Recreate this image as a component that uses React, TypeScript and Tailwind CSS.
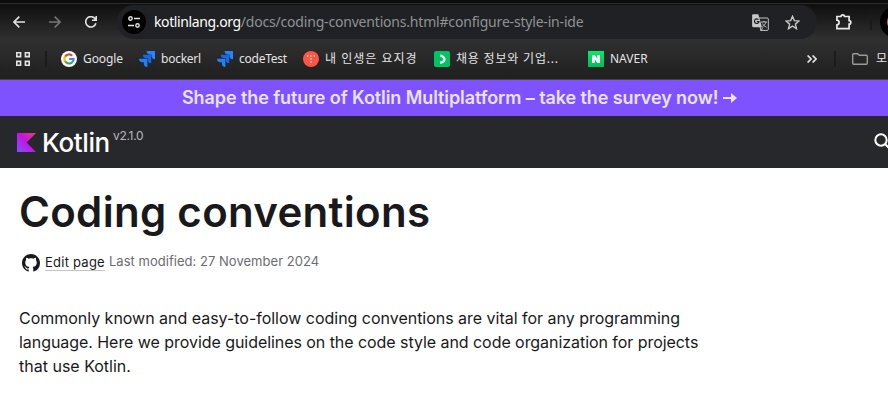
import type { ReactNode } from 'react';

interface BookmarkProps {
    label: string;
    icon: ReactNode;
    className: string;
    textClass: string;
}

const GoogleIcon = () => (
    <svg className="shrink-0" width="16" height="16" viewBox="0 0 16 16" fill="none">
        <circle cx="8" cy="8" r="8" fill="#fff" />
        <g strokeWidth="2.1">
            <path d="M4.1 5.6A4.6 4.6 0 0 1 11.2 4.7" stroke="#ea4335" />
            <path d="M4.1 5.5a4.7 4.7 0 0 0 0 5" stroke="#fbbc05" />
            <path d="M4.1 10.3a4.6 4.6 0 0 0 6.9 1.1" stroke="#34a853" />
            <path d="M8.2 8h4.4c0 1.6-.6 2.7-1.7 3.5" stroke="#4285f4" />
        </g>
    </svg>
);

const JiraIcon = () => (
    <svg className="shrink-0" width="16" height="16" viewBox="0 0 24 24">
        <path d="M11.571 11.513H0a5.218 5.218 0 0 0 5.232 5.215h2.130v2.057A5.215 5.215 0 0 0 12.575 24V12.518a1.005 1.005 0 0 0-1.005-1.005z" fill="#2380fa" />
        <path d="M17.294 5.757H5.736a5.215 5.215 0 0 0 5.215 5.214h2.129v2.058a5.218 5.218 0 0 0 5.215 5.214V6.758a1.001 1.001 0 0 0-1.001-1.001z" fill="#1a68de" />
        <path d="M23.013 0H11.455a5.215 5.215 0 0 0 5.215 5.215h2.129v2.057A5.215 5.215 0 0 0 24 12.483V1.005A1.001 1.001 0 0 0 23.013 0z" fill="#2684ff" />
    </svg>
);

const TistoryIcon = () => (
    <svg className="shrink-0" width="16" height="16" viewBox="0 0 16 16">
        <circle cx="8" cy="8" r="8" fill="#ff5544" />
        <g fill="#fff">
            <circle cx="4.800" cy="5" r=".8" />
            <circle cx="8" cy="5" r=".8" />
            <circle cx="11.200" cy="5" r=".8" />
            <circle cx="8" cy="8" r=".8" />
            <circle cx="8" cy="11" r=".8" />
        </g>
    </svg>
);

const JobIcon = () => (
    <svg className="shrink-0" width="16" height="16" viewBox="0 0 16 16" fill="none">
        <rect width="16" height="16" rx="2" fill="#00c362" />
        <path d="M6.300 4.300c2.500 1 4.200 2.200 4.200 4S8.900 11.300 6 11.900" stroke="#fff" strokeWidth="2.200" />
    </svg>
);

const NaverIcon = () => (
    <svg className="shrink-0" width="16" height="16" viewBox="0 0 16 16">
        <defs>
            <linearGradient id="naver" x1="0" y1="0" x2="0" y2="1">
                <stop offset="0" stopColor="#03ee64" />
                <stop offset="1" stopColor="#04b95c" />
            </linearGradient>
        </defs>
        <rect width="16" height="16" fill="url(#naver)" />
        <path d="M4 4h2.800l2.500 3.700V4H12v8H9.300L6.800 8.300V12H4z" fill="#fff" />
    </svg>
);

const TranslateIcon = () => (
    <svg className="shrink-0" width="17" height="17" viewBox="0 0 17 17" fill="none">
        <path d="M6 4h9.300c.6 0 1 .4 1 1v10.400c0 .6-.4 1-1 1H8.500" stroke="#c7c7c7" />
        <path d="M1.300.3h5l3.700 12.900H1.300c-.7 0-1.200-.5-1.200-1.200V1.500C.1.800.6.3 1.300.3z" fill="#c7c7c7" />
        <path d="M6.500 5.700A2.300 2.300 0 1 0 7 7.700H4.800" stroke="#202124" strokeWidth="1.200" />
        <path d="M9 8h6M12 6.800V8M14 8c-.5 2-2 3.500-3.500 4.500M10.500 9.500c.8 1.600 2 2.800 4 3.700M8 13l1 3.500 2-3.300" stroke="#c7c7c7" />
    </svg>
);

const Bookmark = ({ label, icon, className, textClass }: BookmarkProps) => (
    <div className={`flex shrink-0 items-center gap-[6px] ${className}`}>
        {icon}
        <span className={`whitespace-nowrap text-xs ${textClass}`}>{label}</span>
    </div>
);

const Toolbar = () => (
    <div className="flex h-[34px] items-center">
        <div className="flex w-[117px] shrink-0 items-center pl-[13px]">
            <svg width="12" height="12" viewBox="0 0 12 12" fill="none" stroke="#e3e3e3" strokeWidth="1.600">
                <path d="M12 6H1M6.300.600.900 6l5.400 5.400" />
            </svg>
            <svg className="ml-6" width="12" height="12" viewBox="0 0 12 12" fill="none" stroke="#757575" strokeWidth="1.600">
                <path d="M0 6h11M5.700.600 11.100 6l-5.400 5.400" />
            </svg>
            <svg className="ml-6" width="12" height="12" viewBox="0 0 12 12" fill="none" stroke="#e3e3e3" strokeWidth="1.600">
                <path d="M10.900 7.200A5.200 5.200 0 1 1 10.500 3.400L11 4.300M11.200 0v4.300H7" />
            </svg>
        </div>
        <div className="flex h-[34px] w-[700px] shrink-0 items-center rounded-full bg-[#202124] pl-[5px]">
            <div className="flex size-6 shrink-0 items-center justify-center rounded-full bg-black">
                <svg width="12" height="12" viewBox="0 0 12 12" fill="none" stroke="#e3e3e3" strokeWidth="1.400">
                    <circle cx="2.500" cy="2.500" r="1.700" />
                    <path d="M6 2.500h6M0 9.500h6" />
                    <circle cx="9.500" cy="9.500" r="1.700" />
                </svg>
            </div>
            <span className="ml-2 w-[598px] shrink-0 whitespace-nowrap text-sm tracking-[-0.19px] text-[#8f9195]">
                <span className="tracking-[-0.38px] text-white">kotlinlang.org</span>/docs/coding-conventions.html#configure-style-in-ide
            </span>
            <TranslateIcon />
            <svg className="ml-4 shrink-0" width="15" height="15" viewBox="0 0 15 15" fill="none" stroke="#c7c7c7" strokeWidth="1.400">
                <path d="m7.500 1.300 1.800 4.300 4.700.4-3.600 3.100 1.100 4.600-4-2.500-4 2.500 1.100-4.600L1 6l4.700-.4z" />
            </svg>
        </div>
        <svg className="ml-[18px] shrink-0" width="18" height="18" viewBox="0 0 18 18" fill="none" stroke="#e8e8e8" strokeWidth="1.700">
            <path d="M1.900 3.500H6C6 1.200 9.500 1.200 9.500 3.500h4.600v4.200c2.300 0 2.300 3.400 0 3.400v4.500H1.900v-3.700c3-.3 3-4.400 0-4.700z" />
        </svg>
        <div className="ml-[17px] h-4 w-[2px] shrink-0 bg-[#1b1b1b]" />
        <div className="ml-2 flex size-8 shrink-0 items-center justify-center rounded-full bg-black">
            <div className="size-[18px] rounded-full bg-[#e06a1c]" />
        </div>
    </div>
);

const BookmarksBar = () => (
    <div className="flex h-[40px] items-center pl-4 text-[#e3e3e3]">
        <svg className="shrink-0" width="14" height="14" viewBox="0 0 14 14" fill="none" stroke="#e3e3e3" strokeWidth="1.600">
            <path d="M.8.800h3.800v3.800H.8zM9.400.800h3.800v3.800H9.400zM.8 9.400h3.800v3.800H.8zM9.400 9.400h3.800v3.800H9.400z" />
        </svg>
        <div className="ml-[15px] h-4 w-[2px] shrink-0 bg-[#1b1b1b]" />
        <Bookmark className="ml-[14px] w-[78px]" textClass="tracking-[-0.1px]" icon={<GoogleIcon />} label="Google" />
        <Bookmark className="w-[78px]" textClass="tracking-[-0.25px]" icon={<JiraIcon />} label="bockerl" />
        <Bookmark className="w-[86px]" textClass="tracking-[-0.25px]" icon={<JiraIcon />} label="codeTest" />
        <Bookmark className="w-[131px]" textClass="tracking-[1px]" icon={<TistoryIcon />} label="내 인생은 요지경" />
        <Bookmark className="w-[154px]" textClass="tracking-[0.8px]" icon={<JobIcon />} label="채용 정보와 기업..." />
        <Bookmark className="w-[219px]" textClass="" icon={<NaverIcon />} label="NAVER" />
        <svg className="shrink-0" width="10" height="8" viewBox="0 0 10 8" fill="none" stroke="#e3e3e3" strokeWidth="1.700">
            <path d="M.6.500 4.100 4 .6 7.500M5.600.500 9.100 4 5.600 7.500" />
        </svg>
        <div className="ml-[17px] h-4 w-[2px] shrink-0 bg-[#1b1b1b]" />
        <svg className="ml-4 shrink-0" width="16" height="12" viewBox="0 0 16 12" fill="none" stroke="#9a9a9a" strokeWidth="1.400">
            <path d="M.7 1.700c0-.6.400-1 1-1h4l1.600 1.600h7c.6 0 1 .4 1 1v7c0 .6-.4 1-1 1H1.700c-.6 0-1-.4-1-1z" />
        </svg>
        <span className="ml-2 text-xs">모</span>
    </div>
);

const App = () => {
    return (
        <div className="h-[415px] w-[888px] overflow-hidden bg-white font-['Inter','Liberation_Sans',sans-serif]">
            <div className="h-[80px] border-b border-[#444444] bg-linear-to-b from-[#0c0c0c] via-[#303030] via-50% to-[#1f1f1f] font-['Noto_Sans','Noto_Sans_CJK_KR',sans-serif]">
                <div className="mb-px h-1 border-b border-[#2c2c2c] bg-[#0c0c0c]" />
                <Toolbar />
                <BookmarksBar />
            </div>
            <div className="flex h-9 items-center bg-[#7f52ff] pl-[182px]">
                <span className="whitespace-nowrap text-lg font-semibold tracking-[-0.09px] text-[#e9e3ff]">Shape the future of Kotlin Multiplatform – take the survey now!</span>
                <svg className="ml-[5px]" width="14" height="12" viewBox="0 0 14 12" fill="none">
                    <path d="M0 6h9" stroke="#e9e3ff" strokeWidth="2" />
                    <path d="m8 1 6 5-6 5z" fill="#e9e3ff" />
                </svg>
            </div>
            <header className="flex h-[52px] items-center bg-[#27282c] pl-[17px] text-white">
                <svg className="shrink-0" width="19" height="19" viewBox="0 0 19 19">
                    <defs>
                        <linearGradient id="kotlin" x1="1" y1="0" x2="0" y2="1">
                            <stop offset="0" stopColor="#e44857" />
                            <stop offset=".45" stopColor="#c711e1" />
                            <stop offset="1" stopColor="#7f52ff" />
                        </linearGradient>
                    </defs>
                    <path d="M0 0h19L9.500 9.500 19 19H0z" fill="url(#kotlin)" />
                </svg>
                <span className="ml-[6px] w-[71px] shrink-0 text-[26px] font-medium tracking-[-0.4px]">Kotlin</span>
                <span className="mb-[12px] w-[761px] shrink-0 text-xs tracking-[-0.3px] text-[#b8b8ba]">v2.1.0</span>
                <svg className="shrink-0" width="18" height="18" viewBox="0 0 18 18" fill="none" stroke="#fff" strokeWidth="2">
                    <circle cx="7" cy="7" r="5.700" />
                    <path d="m11 11 6 6" />
                </svg>
            </header>
            <main className="pl-5 text-[#19191c]">
                <h1 className="-ml-px pt-[18px] text-[42px] leading-[52px] font-semibold tracking-[0.3px]">
                    <span className="whitespace-nowrap">Coding conventions</span>
                </h1>
                <div className="mt-[14px] flex h-5 items-center pl-[2px] text-[13px]">
                    <svg className="mt-[2px]" width="18" height="18" viewBox="0 0 16 16" fill="#19191c">
                        <path d="M8 0C3.580 0 0 3.580 0 8c0 3.540 2.290 6.530 5.470 7.590.4.070.55-.17.55-.38 0-.19-.01-.82-.01-1.490-2.010.37-2.530-.49-2.690-.94-.09-.23-.48-.94-.82-1.130-.28-.15-.68-.52-.01-.53.630-.01 1.080.580 1.230.820.720 1.210 1.870.870 2.330.660.070-.52.280-.87.510-1.070-1.780-.2-3.640-.89-3.640-3.950 0-.87.310-1.590.820-2.150-.08-.2-.36-1.020.080-2.120 0 0 .670-.21 2.200.820.640-.18 1.320-.27 2-.27s1.360.090 2 .27c1.530-1.040 2.200-.82 2.200-.82.440 1.100.160 1.920.080 2.120.510.560.820 1.270.820 2.150 0 3.070-1.870 3.750-3.650 3.950.290.250.540.730.540 1.480 0 1.070-.01 1.930-.01 2.200 0 .210.150.460.550.380A8.010 8.010 0 0 0 16 8c0-4.420-3.580-8-8-8z" />
                    </svg>
                    <span className="ml-[5px] whitespace-nowrap border-b border-[#c4c4c6] leading-[16px] tracking-[0.24px]">Edit page</span>
                    <span className="ml-1 whitespace-nowrap tracking-[0.03px] text-[#6b6b6f]">Last modified: 27 November 2024</span>
                </div>
                <p className="-ml-px mt-[34px] text-base">
                    <span className="whitespace-nowrap tracking-[-0.02px]">Commonly known and easy-to-follow coding conventions are vital for any programming</span><br />
                    <span className="whitespace-nowrap tracking-[-0.055px]">language. Here we provide guidelines on the code style and code organization for projects</span><br />
                    <span className="whitespace-nowrap">that use Kotlin.</span>
                </p>
            </main>
        </div>
    );
};

export default App;
